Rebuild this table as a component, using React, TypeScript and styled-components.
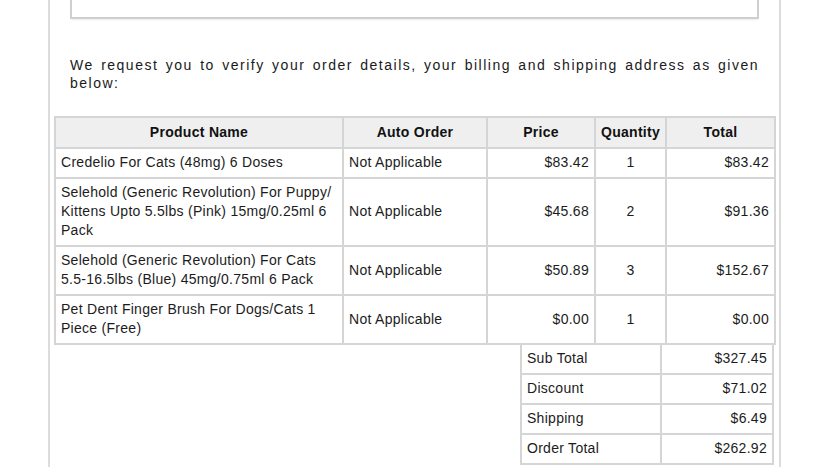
import React from "react";
import styled, { createGlobalStyle } from "styled-components";

const Global = createGlobalStyle`
  html, body { margin: 0; padding: 0; background: #fff; }
  body { font-family: "Liberation Sans", Arial, sans-serif; color: #1c1c1c; }
`;

const Page = styled.div`
  margin-left: 48px;
  width: 729px;
  min-height: 467px;
  border-left: 2px solid #dcdcdc;
  border-right: 2px solid #dcdcdc;
`;

const TopBox = styled.div`
  margin: 0 20px 0 20px;
  height: 17px;
  border: 2px solid #cfcfcf;
  border-top: none;
  box-shadow: 0 2px 2px -1px rgba(0, 0, 0, 0.08);
`;

const Intro = styled.p`
  margin: 37px 20px 0 20px;
  font-size: 14px;
  line-height: 18px;
  letter-spacing: 1.5px;
  text-align: justify;
  color: #1a1a1a;
`;

const Tables = styled.div`
  margin: 24px 3px 0 4px;
  width: 720px;
  display: flex;
  flex-direction: column;
`;

const OrderTable = styled.table`
  width: 720px;
  border-collapse: collapse;
  table-layout: fixed;
  font-size: 14px;
  line-height: 19px;
  letter-spacing: 0.28px;
`;

const Th = styled.th`
  background: #efefef;
  border: 2px solid #d5d5d5;
  padding: 5px 5px;
  font-weight: bold;
  text-align: center;
  color: #111;
`;

const Td = styled.td<{ $align?: "left" | "right" | "center" }>`
  border: 2px solid #d5d5d5;
  padding: 4px 5px 5px 5px;
  text-align: ${(p) => p.$align || "left"};
  vertical-align: middle;
`;

const SummaryTable = styled.table`
  align-self: flex-end;
  width: 252px;
  margin-top: -2px;
  border-collapse: collapse;
  table-layout: fixed;
  font-size: 14px;
  line-height: 19px;
  letter-spacing: 0.28px;
`;

const items = [
  { name: "Credelio For Cats (48mg) 6 Doses", auto: "Not Applicable", price: "$83.42", qty: "1", total: "$83.42" },
  {
    name: "Selehold (Generic Revolution) For Puppy/ Kittens Upto 5.5lbs (Pink) 15mg/0.25ml 6 Pack",
    auto: "Not Applicable",
    price: "$45.68",
    qty: "2",
    total: "$91.36",
  },
  {
    name: "Selehold (Generic Revolution) For Cats 5.5-16.5lbs (Blue) 45mg/0.75ml 6 Pack",
    auto: "Not Applicable",
    price: "$50.89",
    qty: "3",
    total: "$152.67",
  },
  { name: "Pet Dent Finger Brush For Dogs/Cats 1 Piece (Free)", auto: "Not Applicable", price: "$0.00", qty: "1", total: "$0.00" },
];

const summary = [
  ["Sub Total", "$327.45"],
  ["Discount", "$71.02"],
  ["Shipping", "$6.49"],
  ["Order Total", "$262.92"],
];

export default function App() {
  return (
    <>
      <Global />
      <Page>
        <TopBox />
        <Intro>
          We request you to verify your order details, your billing and shipping address as given below:
        </Intro>
        <Tables>
          <OrderTable>
            <colgroup>
              <col style={{ width: 288 }} />
              <col style={{ width: 144 }} />
              <col style={{ width: 108 }} />
              <col style={{ width: 71 }} />
              <col style={{ width: 109 }} />
            </colgroup>
            <thead>
              <tr>
                <Th>Product Name</Th>
                <Th>Auto Order</Th>
                <Th>Price</Th>
                <Th>Quantity</Th>
                <Th>Total</Th>
              </tr>
            </thead>
            <tbody>
              {items.map((it) => (
                <tr key={it.name}>
                  <Td>{it.name}</Td>
                  <Td>{it.auto}</Td>
                  <Td $align="right">{it.price}</Td>
                  <Td $align="center">{it.qty}</Td>
                  <Td $align="right">{it.total}</Td>
                </tr>
              ))}
            </tbody>
          </OrderTable>
          <SummaryTable>
            <colgroup>
              <col style={{ width: 140 }} />
              <col style={{ width: 112 }} />
            </colgroup>
            <tbody>
              {summary.map(([label, value]) => (
                <tr key={label}>
                  <Td>{label}</Td>
                  <Td $align="right">{value}</Td>
                </tr>
              ))}
            </tbody>
          </SummaryTable>
        </Tables>
      </Page>
    </>
  );
}
